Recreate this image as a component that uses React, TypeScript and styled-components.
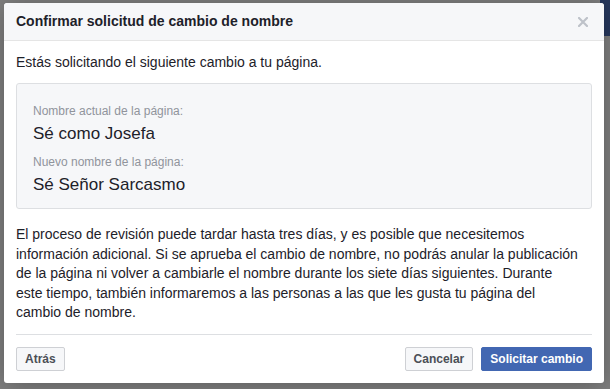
import React from 'react';
import styled, { createGlobalStyle } from 'styled-components';

const GlobalStyle = createGlobalStyle`
	html, body {
		margin: 0;
		padding: 0;
	}
	body {
		font-family: 'Liberation Sans', Arial, Helvetica, sans-serif;
		color: #1d2129;
		-webkit-font-smoothing: antialiased;
	}
`;

type ButtonProps = {
	$primary?: boolean;
};

const RenameConfirmDialog: React.FC = () => {
	return (
		<>
			<GlobalStyle />
			<Backdrop>
				<PageBar />
				<Dialog>
					<DialogHeader>
						<DialogTitle>Confirmar solicitud de cambio de nombre</DialogTitle>
						<CloseButton aria-label='Cerrar'>
							<svg width='10' height='10' viewBox='0 0 10 10'>
								<path
									d='M1 1 L9 9 M9 1 L1 9'
									stroke='#bec2c9'
									strokeWidth='2.2'
									strokeLinecap='square'
								/>
							</svg>
						</CloseButton>
					</DialogHeader>
					<DialogBody>
						<Intro>Estás solicitando el siguiente cambio a tu página.</Intro>
						<NameBox>
							<NameGroup>
								<NameLabel>Nombre actual de la página:</NameLabel>
								<NameValue>Sé como Josefa</NameValue>
							</NameGroup>
							<NameGroup>
								<NameLabel>Nuevo nombre de la página:</NameLabel>
								<NameValue>Sé Señor Sarcasmo</NameValue>
							</NameGroup>
						</NameBox>
						<Notice>
							El proceso de revisión puede tardar hasta tres días, y es posible
							que necesitemos información adicional. Si se aprueba el cambio de
							nombre, no podrás anular la publicación de la página ni volver a
							cambiarle el nombre durante los siete días siguientes. Durante
							<br />
							este tiempo, también informaremos a las personas a las que les
							gusta tu página del
							<br />
							cambio de nombre.
						</Notice>
					</DialogBody>
					<DialogFooter>
						<Button type='button'>Atrás</Button>
						<FooterRight>
							<Button type='button'>Cancelar</Button>
							<Button type='button' $primary>
								Solicitar cambio
							</Button>
						</FooterRight>
					</DialogFooter>
				</Dialog>
			</Backdrop>
		</>
	);
};

const Backdrop = styled.div`
	position: relative;
	width: 610px;
	height: 389px;
	overflow: hidden;
	background-color: #808080;
`;

const PageBar = styled.div`
	position: absolute;
	top: 0;
	left: 0;
	right: 0;
	height: 36px;
	background: linear-gradient(to right, #808080 0 600px, #27395f 600px);
`;

const Dialog = styled.div`
	position: absolute;
	top: 3px;
	left: 4px;
	width: 600px;
	height: 380px;
	display: flex;
	flex-direction: column;
	background-color: #ffffff;
	border-radius: 3px;
	box-shadow: 0 2px 26px #0000004d;
	overflow: hidden;
`;

const DialogHeader = styled.div`
	height: 39px;
	display: flex;
	align-items: center;
	justify-content: space-between;
	padding: 0 12px;
	background-color: #f6f7f9;
	border-bottom: 1px solid #e5e5e5;
	border-radius: 3px 3px 0 0;
`;

const DialogTitle = styled.h3`
	margin: 0;
	font-size: 14px;
	font-weight: bold;
	line-height: 19px;
	color: #1d2129;
`;

const CloseButton = styled.span`
	display: flex;
	align-items: center;
	justify-content: center;
	width: 16px;
	height: 16px;
	margin-right: 1px;
	cursor: pointer;
`;

const DialogBody = styled.div`
	padding: 12px 12px 0;
`;

const Intro = styled.p`
	margin: 0;
	font-size: 14px;
	line-height: 18px;
`;

const NameBox = styled.div`
	margin-top: 12px;
	padding: 19px 16px 13px;
	display: flex;
	flex-direction: column;
	gap: 10px;
	background-color: #f6f7f9;
	border: 1px solid #dddfe2;
	border-radius: 3px;
`;

const NameGroup = styled.div`
	display: flex;
	flex-direction: column;
	gap: 5px;
`;

const NameLabel = styled.div`
	font-size: 12px;
	line-height: 16px;
	color: #90949c;
`;

const NameValue = styled.div`
	font-size: 17px;
	line-height: 20px;
	color: #1d2129;
`;

const Notice = styled.p`
	margin: 16px 0 0;
	font-size: 14px;
	line-height: 19.6px;
	color: #1d2129;
`;

const DialogFooter = styled.div`
	margin: 11px 12px 0;
	padding: 12px 0;
	display: flex;
	justify-content: space-between;
	border-top: 1px solid #dddfe2;
`;

const FooterRight = styled.div`
	display: flex;
	gap: 8px;
`;

const Button = styled.button<ButtonProps>`
	height: 24px;
	padding: 0 8px;
	font-family: 'Liberation Sans', Arial, Helvetica, sans-serif;
	font-size: 12px;
	font-weight: bold;
	line-height: 22px;
	border-radius: 2px;
	cursor: pointer;
	border: 1px solid ${(p) => (p.$primary ? '#4267b2' : '#ced0d4')};
	background-color: ${(p) => (p.$primary ? '#4267b2' : '#f6f7f9')};
	color: ${(p) => (p.$primary ? '#ffffff' : '#4b4f56')};
`;

export default RenameConfirmDialog;
